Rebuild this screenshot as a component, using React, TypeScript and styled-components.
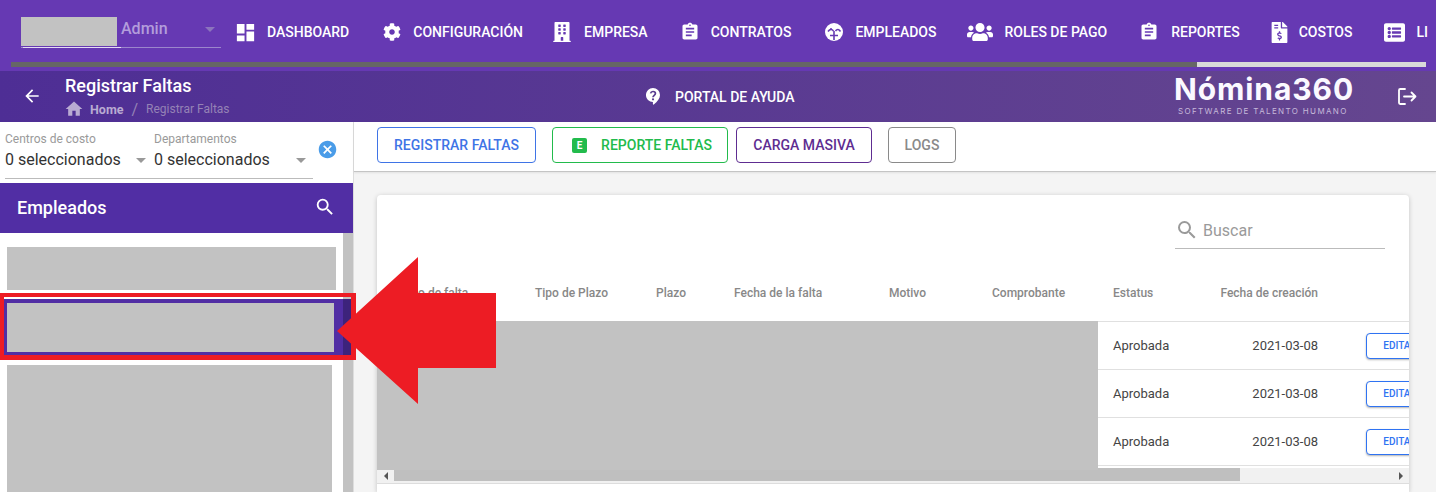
import React from "react";
import styled, { createGlobalStyle } from "styled-components";
import {
  MdDashboard, MdAssignment, MdHome, MdArrowBack, MdSearch, MdCancel, MdArrowDropDown,
} from "react-icons/md";
import { FaCog, FaBuilding, FaUsers, FaFileInvoiceDollar, FaListAlt } from "react-icons/fa";

const Global = createGlobalStyle`
  html, body { margin: 0; padding: 0; background: #fff; }
  * { box-sizing: border-box; }
  body { font-family: Roboto, "Liberation Sans", sans-serif; }
`;

const Page = styled.div`
  position: relative;
  width: 1436px;
  height: 492px;
  overflow: hidden;
`;

const TopBar = styled.header`
  height: 71px;
  background: #6639b3;
  padding-bottom: 4px;
  display: flex;
  flex-direction: column;
`;

const NavRow = styled.div`
  height: 62px;
  padding-left: 21px;
  display: flex;
  align-items: flex-start;
  overflow: hidden;
`;

const UserBox = styled.div`
  width: 200px;
  margin-top: 17px;
  height: 31px;
  display: flex;
  position: relative;
  border-bottom: 1px solid #9c86cc;
  flex: none;
`;

const UserPhoto = styled.div`
  width: 96px;
  height: 29px;
  background: #c2c2c2;
`;

const UserName = styled.span`
  margin-left: 4px;
  font-size: 16px;
  font-weight: 500;
  line-height: 24px;
  color: #b39ddb;
`;

const UserCaret = styled.span`
  margin-left: auto;
  margin-right: -1px;
  color: #8c74bd;
  display: flex;
  height: 24px;
  font-size: 24px;
`;

const UserFocusLine = styled.span`
  position: absolute;
  left: 2px;
  bottom: -1px;
  width: 98px;
  height: 1px;
  background: #e4dcf3;
`;

const NavList = styled.nav`
  display: flex;
  margin-left: 15px;
`;

const NavItem = styled.a<{ $gap: number; $after: number }>`
  display: flex;
  align-items: center;
  height: 30px;
  margin-top: 17px;
  gap: ${(p) => p.$gap}px;
  margin-right: ${(p) => p.$after}px;
  color: #fff;
  font-size: 14px;
  font-weight: 500;
  white-space: nowrap;
  flex: none;
`;

const Track = styled.div`
  height: 5px;
  margin: 0 10px 0 11px;
  background: #d9d9d9;
`;

const Fill = styled.div<{ $pct: number }>`
  height: 100%;
  width: ${(p) => p.$pct}%;
  background: #666666;
`;

const SubBar = styled.div`
  height: 51px;
  background: linear-gradient(90deg, #4e2e95, #65468f);
  display: flex;
  align-items: center;
  color: #fff;
`;

const BackSlot = styled.div`
  width: 65px;
  padding-left: 22px;
  margin-top: -1px;
  display: flex;
  font-size: 20px;
`;

const Crumbs = styled.div`
  width: 581px;
  align-self: flex-start;
  padding-top: 3px;
  display: flex;
  flex-direction: column;
`;

const PageTitle = styled.div`
  font-size: 18px;
  font-weight: 500;
  line-height: 24px;
`;

const Trail = styled.div`
  display: flex;
  align-items: center;
  height: 18px;
  margin-top: 2px;
  font-size: 12px;
  color: #9582b5;
`;

const TrailHome = styled.span`
  display: flex;
  align-items: center;
  font-weight: 700;
  color: #b9abd2;
  gap: 6px;
  font-size: 12.5px;
  svg { font-size: 20px; margin-left: -1px; }
`;

const TrailSep = styled.span`
  margin: 0 8px;
  font-size: 16px;
`;

const Help = styled.a`
  display: flex;
  align-items: center;
  gap: 15px;
  width: 528px;
  font-size: 14px;
  font-weight: 500;
`;

const Logo = styled.div`
  width: 224px;
  display: flex;
  flex-direction: column;
  margin-top: -3px;
`;

const LogoName = styled.div`
  font-family: Inter, sans-serif;
  font-size: 30px;
  font-weight: 700;
  letter-spacing: 0.9px;
  line-height: 31px;
  margin-bottom: 1px;
  color: #fbf9ff;
`;

const LogoTag = styled.div`
  font-family: Inter, sans-serif;
  font-size: 8px;
  letter-spacing: 1.35px;
  line-height: 10px;
  padding-left: 4px;
  color: #c6b9da;
`;

const Body = styled.div`
  display: flex;
  height: 370px;
`;

const Side = styled.aside`
  width: 354px;
  flex: none;
  border-right: 1px solid #dddddd;
  display: flex;
  flex-direction: column;
`;

const Filters = styled.div`
  height: 61px;
  display: flex;
  padding-left: 5px;
`;

const FilterFields = styled.div`
  width: 308px;
  height: 57px;
  border-bottom: 1px solid #bbbbbb;
  display: flex;
  padding-top: 9px;
`;

const Field = styled.div<{ $w: number }>`
  width: ${(p) => p.$w}px;
  position: relative;
`;

const FieldLabel = styled.div`
  font-size: 12px;
  line-height: 16px;
  color: #9a9a9a;
`;

const FieldValue = styled.div`
  font-size: 16px;
  line-height: 20px;
  margin-top: 3px;
  color: #333333;
`;

const FieldCaret = styled.span<{ $right: number }>`
  position: absolute;
  top: 17px;
  right: ${(p) => p.$right}px;
  font-size: 24px;
  display: flex;
  color: #999999;
`;

const ClearBtn = styled.span`
  margin: 17px 0 0 4px;
  font-size: 21px;
  height: 21px;
  display: flex;
  color: #4a9ce8;
`;

const SideHead = styled.div`
  height: 50px;
  background: #512ea4;
  color: #fff;
  display: flex;
  align-items: center;
  justify-content: space-between;
  padding: 0 17px 2px 17px;
  font-size: 18px;
  font-weight: 500;
  svg { font-size: 22px; display: block; }
`;

const EmpList = styled.div`
  position: relative;
  flex: 1;
  overflow: hidden;
`;

const EmpRow = styled.div<{ $pt: number; $pb: number; $active?: boolean }>`
  padding: ${(p) => p.$pt}px 0 ${(p) => p.$pb}px 7px;
  background: ${(p) => (p.$active ? "#512ea4" : "transparent")};
`;

const EmpBlock = styled.div<{ $w: number; $h: number }>`
  width: ${(p) => p.$w}px;
  height: ${(p) => p.$h}px;
  background: #c2c2c2;
`;

const ListScroll = styled.div`
  position: absolute;
  top: 0;
  right: 0;
  bottom: 0;
  width: 10px;
  background: rgba(0, 0, 0, 0.24);
`;

const Main = styled.main`
  flex: 1;
  background: #f4f4f4;
  display: flex;
  flex-direction: column;
  min-width: 0;
`;

const Toolbar = styled.div`
  height: 50px;
  background: #fff;
  border-bottom: 1px solid #c4c4c4;
  box-shadow: 0 1px 2px rgba(0, 0, 0, 0.08);
  display: flex;
  align-items: flex-start;
  padding: 5px 0 0 23px;
`;

const ToolBtn = styled.button<{ $c: string; $w: number; $after: number; $pl?: number }>`
  width: ${(p) => p.$w}px;
  margin-right: ${(p) => p.$after}px;
  height: 36px;
  border: 1px solid ${(p) => p.$c};
  border-radius: 4px;
  background: #fff;
  color: ${(p) => p.$c};
  font-family: Roboto, sans-serif;
  font-size: 14px;
  font-weight: 500;
  display: flex;
  align-items: center;
  justify-content: center;
  gap: 14px;
  padding: 0 0 0 ${(p) => p.$pl ?? 0}px;
`;

const ExcelMark = styled.span`
  width: 15px;
  height: 15px;
  border-radius: 2px;
  background: #22bb4c;
  color: #fff;
  font-size: 10px;
  font-weight: 700;
  display: flex;
  align-items: center;
  justify-content: center;
`;

const Card = styled.section`
  margin: 23px 0 0 23px;
  width: 1032px;
  flex: 1;
  background: #fff;
  border-radius: 4px 4px 0 0;
  box-shadow: 0 1px 5px rgba(0, 0, 0, 0.2);
  overflow: hidden;
  display: flex;
  flex-direction: column;
`;

const SearchRow = styled.div`
  height: 54px;
  flex: none;
  display: flex;
  justify-content: flex-end;
  padding: 17px 24px 0 0;
`;

const SearchBox = styled.div`
  width: 210px;
  height: 37px;
  border-bottom: 1px solid #bbbbbb;
  display: flex;
  align-items: center;
  gap: 4px;
  color: #9a9a9a;
  font-size: 16px;
  svg { font-size: 24px; }
`;

const columns = "134px 121px 78px 155px 103px 121px 107px 146px 70px";

const HeadRow = styled.div`
  height: 73px;
  flex: none;
  display: grid;
  grid-template-columns: ${columns};
  padding: 16px 0 0 24px;
  border-bottom: 1px solid #e0e0e0;
  align-items: center;
`;

const HeadCell = styled.div<{ $right?: boolean }>`
  font-size: 12px;
  font-weight: 500;
  color: #888888;
  white-space: nowrap;
  ${(p) => (p.$right ? "text-align: right; padding-right: 48px;" : "")}
`;

const TableBody = styled.div`
  display: flex;
  height: 146px;
  flex: none;
`;

const Redacted = styled.div`
  width: 721px;
  height: 149px;
  margin-top: -1px;
  background: #c2c2c2;
  position: relative;
  flex: none;
`;

const Rows = styled.div`
  flex: 1;
  display: flex;
  flex-direction: column;
`;

const DataRow = styled.div`
  height: 48px;
  flex: none;
  border-bottom: 1px solid #e0e0e0;
  display: grid;
  grid-template-columns: 15px 107px 146px 68px;
  align-items: center;
  font-size: 13px;
  color: #444444;
`;

const DateCell = styled.div`
  text-align: right;
  padding-right: 48px;
`;

const EditBtn = styled.button`
  width: 68px;
  height: 26px;
  border: 1px solid #2f73f2;
  border-radius: 4px;
  background: #fff;
  color: #2f73f2;
  box-shadow: 0 1px 2px rgba(0, 0, 0, 0.3);
  font-family: Roboto, sans-serif;
  font-size: 10px;
  font-weight: 500;
  padding: 0;
`;

const HScroll = styled.div`
  height: 16px;
  flex: none;
  background: #f1f1f1;
  border-bottom: 1px solid #dddddd;
  display: flex;
  align-items: center;
`;

const ScrollEnd = styled.span<{ $w: number; $dir: "l" | "r" }>`
  width: ${(p) => p.$w}px;
  display: flex;
  justify-content: center;
  &::before {
    content: "";
    border-top: 4px solid transparent;
    border-bottom: 4px solid transparent;
    ${(p) => (p.$dir === "l" ? "border-right: 4px solid #555;" : "border-left: 4px solid #555;")}
  }
`;

const ScrollThumb = styled.div`
  width: 846px;
  height: 13px;
  align-self: flex-start;
  background: #bfbfbf;
`;

const ScrollGap = styled.div`
  flex: 1;
`;

const RedFrame = styled.div`
  position: absolute;
  left: 0;
  top: 293px;
  width: 356px;
  height: 67px;
  border: solid #ed1c24;
  border-width: 4px 5px 5px 4px;
`;

const RedArrow = styled.svg`
  position: absolute;
  left: 337px;
  top: 257px;
  width: 160px;
  height: 148px;
`;

const FaceIcon = () => (
  <svg width="18" height="18" viewBox="0 0 18 18">
    <circle cx="9" cy="9" r="9" fill="#fff" />
    <path d="M3 8.5 C5 6 7 6 8.5 8 M10.5 8 C12 6 14 6 15.5 8.5" stroke="#6639b3" strokeWidth="1.6" fill="none" />
    <path d="M9 8v9M5 12.5h8" stroke="#6639b3" strokeWidth="1.6" fill="none" />
    <circle cx="6" cy="6" r="1" fill="#6639b3" />
  </svg>
);

const HelpIcon = () => (
  <svg width="14" height="17" viewBox="0 0 14 17">
    <path d="M7 0a7 7 0 0 1 7 7c0 3.4-2.4 6.4-6.2 9.6-.4.3-.9 0-.9-.5V14A7 7 0 0 1 7 0z" fill="#fff" />
    <path d="M4.6 5.4A2.4 2.4 0 0 1 7 3.5c1.4 0 2.4 .9 2.4 2 0 1.7-2.4 1.9-2.4 3.7" stroke="#573a90" strokeWidth="1.7" fill="none" />
    <circle cx="7" cy="11.3" r="1.1" fill="#573a90" />
  </svg>
);

const LogoutIcon = () => (
  <svg width="19" height="17" viewBox="0 0 19 17" fill="none" stroke="#fff" strokeWidth="1.8" strokeLinecap="round" strokeLinejoin="round">
    <path d="M7 1H2.2C1.5 1 1 1.5 1 2.2v12.6c0 .7.5 1.2 1.2 1.2H7" />
    <path d="M6 8.5h11.5M13.5 4.5l4 4-4 4" />
  </svg>
);

const navItems: { label: string; icon: React.ReactNode; gap: number; after: number }[] = [
  { label: "DASHBOARD", icon: <MdDashboard size={23} style={{ margin: "0 -2px" }} />, gap: 12, after: 34 },
  { label: "CONFIGURACIÓN", icon: <FaCog size={18} />, gap: 12, after: 29 },
  { label: "EMPRESA", icon: <FaBuilding size={20} />, gap: 12, after: 34 },
  { label: "CONTRATOS", icon: <MdAssignment size={20} style={{ margin: "0 -2px" }} />, gap: 13, after: 34 },
  { label: "EMPLEADOS", icon: <FaceIcon />, gap: 12, after: 31 },
  { label: "ROLES DE PAGO", icon: <FaUsers size={26} />, gap: 11, after: 34 },
  { label: "REPORTES", icon: <MdAssignment size={20} style={{ margin: "0 -2px" }} />, gap: 14, after: 29 },
  { label: "COSTOS", icon: <FaFileInvoiceDollar size={21} />, gap: 9, after: 32 },
  { label: "LI", icon: <FaListAlt size={21} />, gap: 11, after: 0 },
];

const headers = [
  "Tipo de falta", "Tipo de Plazo", "Plazo", "Fecha de la falta", "Motivo", "Comprobante", "Estatus",
];

export default function App() {
  return (
    <Page>
      <Global />
      <TopBar>
        <NavRow>
          <UserBox>
            <UserPhoto />
            <UserName>Admin</UserName>
            <UserCaret><MdArrowDropDown /></UserCaret>
            <UserFocusLine />
          </UserBox>
          <NavList>
            {navItems.map((n) => (
              <NavItem key={n.label} $gap={n.gap} $after={n.after}>
                {n.icon}
                {n.label}
              </NavItem>
            ))}
          </NavList>
        </NavRow>
        <Track><Fill $pct={83.8} /></Track>
      </TopBar>
      <SubBar>
        <BackSlot><MdArrowBack /></BackSlot>
        <Crumbs>
          <PageTitle>Registrar Faltas</PageTitle>
          <Trail>
            <TrailHome><MdHome />Home</TrailHome>
            <TrailSep>/</TrailSep>
            Registrar Faltas
          </Trail>
        </Crumbs>
        <Help><HelpIcon />PORTAL DE AYUDA</Help>
        <Logo>
          <LogoName>Nómina360</LogoName>
          <LogoTag>SOFTWARE DE TALENTO HUMANO</LogoTag>
        </Logo>
        <LogoutIcon />
      </SubBar>
      <Body>
        <Side>
          <Filters>
            <FilterFields>
              <Field $w={149}>
                <FieldLabel>Centros de costo</FieldLabel>
                <FieldValue>0 seleccionados</FieldValue>
                <FieldCaret $right={1}><MdArrowDropDown /></FieldCaret>
              </Field>
              <Field $w={159}>
                <FieldLabel>Departamentos</FieldLabel>
                <FieldValue>0 seleccionados</FieldValue>
                <FieldCaret $right={0}><MdArrowDropDown /></FieldCaret>
              </Field>
            </FilterFields>
            <ClearBtn><MdCancel /></ClearBtn>
          </Filters>
          <SideHead>Empleados<MdSearch /></SideHead>
          <EmpList>
            <EmpRow $pt={14} $pb={9}><EmpBlock $w={329} $h={43} /></EmpRow>
            <EmpRow $pt={4} $pb={4} $active><EmpBlock $w={327} $h={49} /></EmpRow>
            <EmpRow $pt={9} $pb={0}><EmpBlock $w={325} $h={130} /></EmpRow>
            <ListScroll />
          </EmpList>
        </Side>
        <Main>
          <Toolbar>
            <ToolBtn $c="#3f74e6" $w={159} $after={16}>REGISTRAR FALTAS</ToolBtn>
            <ToolBtn $c="#22bb4c" $w={176} $after={8} $pl={4}><ExcelMark>E</ExcelMark>REPORTE FALTAS</ToolBtn>
            <ToolBtn $c="#5e2d91" $w={136} $after={16}>CARGA MASIVA</ToolBtn>
            <ToolBtn $c="#8a8a8a" $w={68} $after={0}>LOGS</ToolBtn>
          </Toolbar>
          <Card>
            <SearchRow>
              <SearchBox><MdSearch />Buscar</SearchBox>
            </SearchRow>
            <HeadRow>
              {headers.map((h) => <HeadCell key={h}>{h}</HeadCell>)}
              <HeadCell $right>Fecha de creación</HeadCell>
            </HeadRow>
            <TableBody>
              <Redacted />
              <Rows>
                {[0, 1, 2].map((i) => (
                  <DataRow key={i}>
                    <span />
                    <span>Aprobada</span>
                    <DateCell>2021-03-08</DateCell>
                    <EditBtn>EDITAR</EditBtn>
                  </DataRow>
                ))}
              </Rows>
            </TableBody>
            <HScroll>
              <ScrollEnd $w={17} $dir="l" />
              <ScrollThumb />
              <ScrollGap />
              <ScrollEnd $w={17} $dir="r" />
            </HScroll>
          </Card>
        </Main>
      </Body>
      <RedFrame />
      <RedArrow viewBox="0 0 160 148">
        <polygon points="0,74 81,0 81,36 159,36 159,111 81,111 81,147" fill="#ed1c24" />
      </RedArrow>
    </Page>
  );
}
